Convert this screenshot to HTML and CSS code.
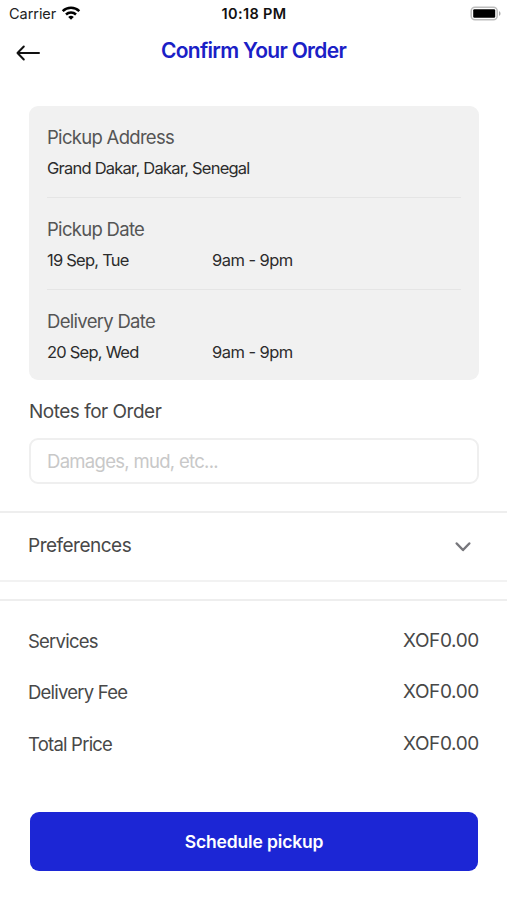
FILE: index.html
```html
<!DOCTYPE html>
<html lang="en">
<head>
<meta charset="utf-8">
<title>Confirm Your Order</title>
<link rel="stylesheet" href="styles.css">
</head>
<body>
<div class="status">
  <div class="carrier"><span class="carrier-name">Carrier</span>
    <svg class="wifi" width="20" height="14" viewBox="0 0 20 14" fill="none" stroke="#000" stroke-width="2.5"><path d="M1.7 5.1a12 12 0 0 1 16.6 0"/><path d="M5 8.5a7.2 7.2 0 0 1 10 0"/><path d="M7.2 11.1a4 4 0 0 1 5.6 0L10 13.8z" fill="#000" stroke="none"/></svg>
  </div>
  <time class="clock">10:18 PM</time>
  <svg class="battery" width="32" height="16" viewBox="0 0 32 16"><rect x="1.2" y="1.2" width="26" height="12.6" rx="3.8" fill="#fff" stroke="#bdbdbd" stroke-width="1.5"/><rect x="3.2" y="3.2" width="22" height="8.6" rx="1.2" fill="#000"/><path d="M29 5.2c2 .7 2 3.900 0 4.600z" fill="#aaa"/></svg>
</div>
<header class="header">
  <svg class="back" width="26" height="18" viewBox="0 0 26 18" fill="none" stroke="#111" stroke-width="2" stroke-linecap="round" stroke-linejoin="round"><path d="M24 9H2.500M8.800 2.500 2.500 9l6.300 6.500"/></svg>
  <h1 class="title">Confirm Your Order</h1>
</header>
<main>
  <section class="card">
    <div class="entry"><h2 class="label">Pickup Address</h2><div class="values"><span class="address">Grand Dakar, Dakar, Senegal</span></div></div>
    <div class="entry"><h2 class="label">Pickup Date</h2><div class="values"><span class="day">19 Sep, Tue</span><span class="hours">9am - 9pm</span></div></div>
    <div class="entry"><h2 class="label">Delivery Date</h2><div class="values"><span class="day">20 Sep, Wed</span><span class="hours">9am - 9pm</span></div></div>
  </section>
  <section class="notes">
    <label class="notes-label" for="notes">Notes for Order</label>
    <input class="notes-input" id="notes" type="text" placeholder="Damages, mud, etc...">
  </section>
  <section class="preferences">
    <span class="pref-label">Preferences</span>
    <svg width="18" height="12" viewBox="0 0 18 12" fill="none" stroke="#77777c" stroke-width="2.500" stroke-linecap="round" stroke-linejoin="round"><path d="M2.700 2.500 9 9l6.300-6.500"/></svg>
  </section>
  <section class="totals">
    <div class="line"><span>Services</span><span class="price">XOF0.00</span></div>
    <div class="line"><span>Delivery Fee</span><span class="price">XOF0.00</span></div>
    <div class="line"><span>Total Price</span><span class="price">XOF0.00</span></div>
  </section>
  <button class="submit" type="button">Schedule pickup</button>
</main>
</body>
</html>
```
FILE: styles.css
```css
* { box-sizing: border-box; }
body {
  margin: 0;
  height: 900px;
  overflow: hidden;
  background: #fff;
  color: #484848;
  font-family: Inter, "Liberation Sans", sans-serif;
  font-size: 19px;
  line-height: 24px;
}
.status {
  display: grid;
  grid-template-columns: 1fr auto 1fr;
  align-items: center;
  height: 28px;
  padding: 0 5px 0 9px;
  color: #222;
}
.carrier { display: flex; align-items: center; gap: 5px; font-size: 14.5px; letter-spacing: -0.05px; }
.wifi { margin-top: -2px; }
.clock { margin-right: 3px; font-size: 14.500px; font-weight: 600; letter-spacing: 0.35px; color: #111; }
.battery { justify-self: end; margin-top: -1px; }
.header {
  display: grid;
  grid-template-columns: 60px 1fr 60px;
  align-items: center;
  height: 46px;
}
.back { margin: 4px 0 0 15px; }
.title {
  margin: 0;
  text-align: center;
  font-size: 21px;
  font-weight: 600;
  letter-spacing: -0.7px;
  color: #1a20c6;
}
.card {
  margin: 32px 28px 0 29px;
  padding: 0 18px;
  height: 274px;
  border-radius: 9px;
  background: #f1f1f1;
}
.entry { height: 92px; padding-top: 19px; border-bottom: 1px solid #e5e5e5; }
.entry:last-child { border-bottom: 0; }
.label {
  margin: 0 0 7px;
  font-size: 18.5px;
  font-weight: 400;
  letter-spacing: -0.7px;
  color: #555;
}
.values {
  display: grid;
  grid-template-columns: 165px 1fr;
  font-size: 16.5px;
  letter-spacing: -0.77px;
  color: #2c2c2c;
}
.address { grid-column: 1 / -1; }
.hours { letter-spacing: -0.55px; }
.notes { margin: 20px 28px 0 29px; }
.notes-label { display: block; margin-bottom: 14px; letter-spacing: -0.5px; }
.notes-input {
  display: block;
  width: 100%;
  height: 46px;
  padding: 0 16px;
  border: 2px solid #efefef;
  border-radius: 9px;
  background: #fff;
  font: inherit;
  font-size: 18.5px;
  letter-spacing: -0.7px;
}
.notes-input::placeholder { color: #c8c8c8; opacity: 1; }
.preferences {
  display: flex;
  align-items: center;
  justify-content: space-between;
  height: 71px;
  margin-top: 27px;
  padding: 0 35px 2px 28px;
  border-top: 2px solid #eee;
  border-bottom: 2px solid #f2f2f2;
}
.pref-label { letter-spacing: -0.5px; }
.preferences svg { margin-top: 3px; }
.totals {
  display: flex;
  flex-direction: column;
  gap: 27.300px;
  height: 213px;
  margin-top: 17px;
  padding: 28px 28px 0 28px;
  border-top: 2px solid #eee;
}
.line { display: flex; justify-content: space-between; font-size: 18.5px; letter-spacing: -0.78px; }
.price { font-size: 19px; letter-spacing: -0.35px; }
.submit {
  display: block;
  width: 448px;
  height: 59px;
  margin: 0 0 0 30px;
  border: 0;
  border-radius: 9px;
  background: #1c26d5;
  color: #fff;
  font: 600 17.500px Inter, "Liberation Sans", sans-serif;
  letter-spacing: -0.15px;
}
```
